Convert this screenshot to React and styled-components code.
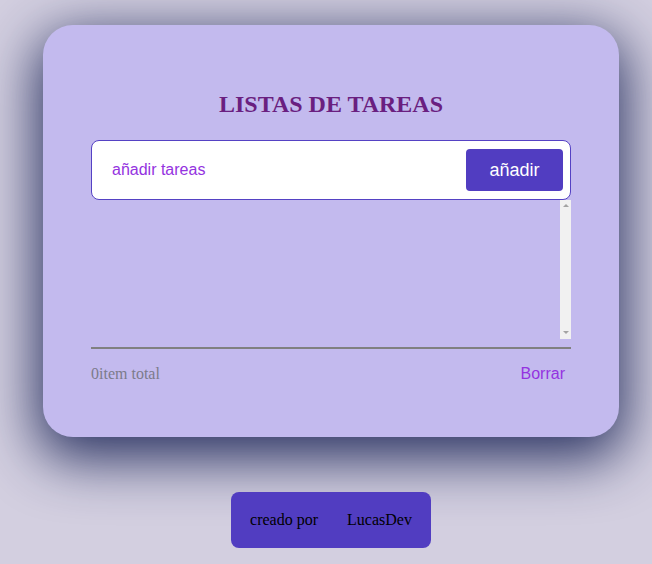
import React from 'react';
import styled, { createGlobalStyle } from 'styled-components';

const GlobalStyle = createGlobalStyle`
  body {
    margin: 0;
    background: #d3cfe0;
    font-family: "Liberation Serif", "Times New Roman", serif;
  }
`;

const Page = styled.div`
  display: flex;
  flex-direction: column;
  align-items: center;
  gap: 55px;
  padding: 25px 0 16px 10px;
`;

const Card = styled.main`
  box-sizing: border-box;
  width: 576px;
  height: 412px;
  padding: 66px 48px 0;
  border-radius: 30px;
  background: #c3baee;
  box-shadow: 0 16px 55px 6px rgba(24, 34, 84, 0.9);
`;

const Title = styled.h1`
  margin: 0 0 22px;
  font-size: 24px;
  font-weight: bold;
  text-align: center;
  color: #6a1f80;
`;

const InputBar = styled.form`
  box-sizing: border-box;
  display: flex;
  align-items: center;
  height: 60px;
  padding: 0 7px 0 20px;
  background: #fff;
  border: 1px solid #5542c4;
  border-radius: 8px;
`;

const TaskInput = styled.input`
  flex: 1;
  padding: 0;
  border: none;
  outline: none;
  background: transparent;
  font-family: "Liberation Sans", Arial, sans-serif;
  font-size: 16px;
  color: #333;

  &::placeholder {
    color: #9433e0;
  }
`;

const AddButton = styled.button`
  width: 97px;
  height: 42px;
  border: none;
  border-radius: 4px;
  background: #513dc1;
  color: #fff;
  font-family: "Liberation Sans", Arial, sans-serif;
  font-size: 18px;
  cursor: pointer;
`;

const ListArea = styled.div`
  display: flex;
  height: 139px;
`;

const TaskList = styled.ul`
  flex: 1;
  margin: 0;
  padding: 0;
  list-style: none;
  overflow: hidden;
`;

const ScrollTrack = styled.div`
  display: flex;
  flex-direction: column;
  justify-content: space-between;
  align-items: center;
  width: 11px;
  padding: 4px 0 5px;
  box-sizing: border-box;
  background: #f1f1f1;
`;

const Arrow = styled.span`
  width: 0;
  height: 0;
  border-left: 3px solid transparent;
  border-right: 3px solid transparent;
  ${({ $down }) =>
    $down ? 'border-top: 3px solid #a3a3a3;' : 'border-bottom: 3px solid #a3a3a3;'}
`;

const Divider = styled.hr`
  margin: 8px 0 0;
  border: none;
  height: 2px;
  background: #808080;
`;

const Summary = styled.div`
  display: flex;
  justify-content: space-between;
  align-items: baseline;
  margin-top: 16px;
`;

const Count = styled.span`
  font-size: 16px;
  color: #7c7a8a;
`;

const ClearButton = styled.button`
  padding: 0 6px;
  border: none;
  background: none;
  color: #9433e0;
  font-family: "Liberation Sans", Arial, sans-serif;
  font-size: 16px;
  cursor: pointer;
`;

const Credits = styled.footer`
  display: flex;
  align-items: center;
  justify-content: center;
  gap: 29px;
  width: 200px;
  height: 56px;
  border-radius: 8px;
  background: #513dc1;
  font-size: 16px;
  color: #000;
`;

export default function App() {
  const tasks = [];

  return (
    <>
      <GlobalStyle />
      <Page>
        <Card>
          <Title>LISTAS DE TAREAS</Title>
          <InputBar onSubmit={(e) => e.preventDefault()}>
            <TaskInput placeholder="añadir tareas" />
            <AddButton type="submit">añadir</AddButton>
          </InputBar>
          <ListArea>
            <TaskList>
              {tasks.map((t) => (
                <li key={t}>{t}</li>
              ))}
            </TaskList>
            <ScrollTrack>
              <Arrow />
              <Arrow $down />
            </ScrollTrack>
          </ListArea>
          <Divider />
          <Summary>
            <Count>{tasks.length}item total</Count>
            <ClearButton>Borrar</ClearButton>
          </Summary>
        </Card>
        <Credits>
          <span>creado por</span>
          <span>LucasDev</span>
        </Credits>
      </Page>
    </>
  );
}
